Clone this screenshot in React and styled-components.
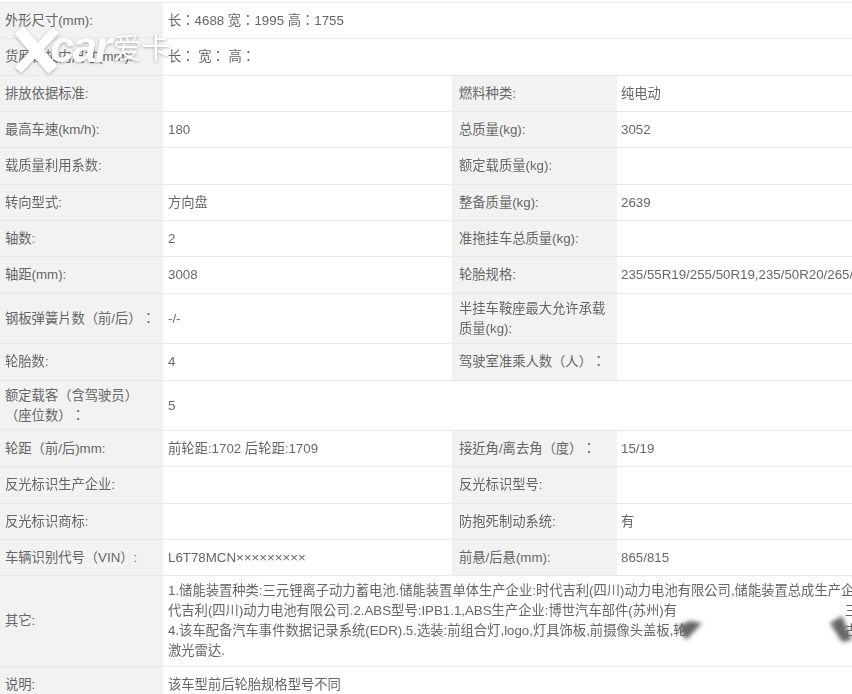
import styled, { createGlobalStyle } from "styled-components";

const GlobalStyle = createGlobalStyle`
  html, body {
    margin: 0;
    padding: 0;
    background: #fff;
    overflow: hidden;
  }
`;

const Page = styled.div`
  position: relative;
  width: 852px;
  height: 694px;
  overflow: hidden;
  background: #fff;
  font-family: "Liberation Sans", "Noto Sans CJK TC", sans-serif;
  font-size: 13.3px;
  color: #666;
  text-spacing-trim: space-all;
`;

const Sheet = styled.div`
  width: 852px;
  padding-top: 2px;
  filter: blur(0.4px);
`;

const Row = styled.div`
  display: grid;
  grid-template-columns: ${({ $wide }) =>
    $wide ? "163px minmax(0, 1fr)" : "163px 289px 165px minmax(0, 1fr)"};
  height: ${({ $h }) => $h}px;
  box-sizing: border-box;
  border-top: 1px solid #e9e9e9;
`;

const Label = styled.div`
  display: flex;
  align-items: center;
  box-sizing: border-box;
  padding-left: ${({ $right }) => ($right ? 7 : 5)}px;
  background: #f2f2f2;
  line-height: 20px;
  white-space: pre-line;
`;

const Value = styled.div`
  display: flex;
  align-items: center;
  box-sizing: border-box;
  padding-left: ${({ $right }) => ($right ? 4 : 5)}px;
  line-height: 20px;
  white-space: nowrap;
  overflow: hidden;
`;

const Notes = styled.div`
  width: 100%;
  white-space: nowrap;
`;

const NoteLine = styled.div`
  display: flex;
  justify-content: space-between;
  margin-right: -6px;
`;

const Logo = styled.div`
  position: absolute;
  left: 14px;
  top: 24px;
  display: flex;
  align-items: center;
  color: #fff;
  filter: drop-shadow(0 1px 1.5px rgba(0, 0, 0, 0.3));
`;

const LogoMark = styled.svg`
  width: 46px;
  height: 52px;
`;

const LogoWord = styled.span`
  margin-left: -10px;
  margin-top: -7px;
  font-family: "Liberation Sans", sans-serif;
  font-weight: 700;
  font-style: italic;
  font-size: 44px;
  line-height: 44px;
  letter-spacing: -2px;
`;

const LogoCn = styled.span`
  margin-left: 3px;
  margin-top: -9px;
  font-family: "Noto Sans CJK SC", sans-serif;
  font-weight: 400;
  font-size: 29px;
  line-height: 34px;
`;

const Patch = styled.svg`
  position: absolute;
  left: 670px;
  top: 596px;
  width: 182px;
  height: 60px;
`;

const rows = [
  { h: 36, wide: true, a: "外形尺寸(mm):", b: "长：4688 宽：1995 高：1755" },
  { h: 37, wide: true, a: "货厢栏板内尺寸(mm):", b: "长：  宽：  高：" },
  { h: 36, a: "排放依据标准:", b: "", c: "燃料种类:", d: "纯电动" },
  { h: 36, a: "最高车速(km/h):", b: "180", c: "总质量(kg):", d: "3052" },
  { h: 37, a: "载质量利用系数:", b: "", c: "额定载质量(kg):", d: "" },
  { h: 36, a: "转向型式:", b: "方向盘", c: "整备质量(kg):", d: "2639" },
  { h: 36, a: "轴数:", b: "2", c: "准拖挂车总质量(kg):", d: "" },
  { h: 37, a: "轴距(mm):", b: "3008", c: "轮胎规格:", d: "235/55R19/255/50R19,235/50R20/265/" },
  { h: 50, a: "钢板弹簧片数（前/后）：", b: "-/-", c: "半挂车鞍座最大允许承载\n质量(kg):", d: "" },
  { h: 37, a: "轮胎数:", b: "4", c: "驾驶室准乘人数（人）：", d: "" },
  { h: 50, wide: true, a: "额定载客（含驾驶员）\n（座位数）：", b: "5" },
  { h: 36, a: "轮距（前/后)mm:", b: "前轮距:1702 后轮距:1709", c: "接近角/离去角（度）：", d: "15/19" },
  { h: 37, a: "反光标识生产企业:", b: "", c: "反光标识型号:", d: "" },
  { h: 36, a: "反光标识商标:", b: "", c: "防抱死制动系统:", d: "有" },
  { h: 36, a: "车辆识别代号（VIN）:", b: "L6T78MCN×××××××××", c: "前悬/后悬(mm):", d: "865/815" },
];

const notes = [
  ["1.储能装置种类:三元锂离子动力蓄电池.储能装置单体生产企业:时代吉利(四川)动力电池有限公司,储能装置总成生产企业"],
  ["代吉利(四川)动力电池有限公司.2.ABS型号:IPB1.1,ABS生产企业:博世汽车部件(苏州)有", "三"],
  ["4.该车配备汽车事件数据记录系统(EDR).5.选装:前组合灯,logo,灯具饰板,前摄像头盖板,轮", "古"],
  ["激光雷达."],
];

function Watermark() {
  return (
    <Logo>
      <LogoMark viewBox="0 0 46 52">
        <path d="M5 6 L39 46" stroke="#fff" strokeWidth="12" fill="none" />
        <path d="M42 6 L4 46" stroke="#fff" strokeWidth="9" fill="none" />
      </LogoMark>
      <LogoWord>car</LogoWord>
      <LogoCn>爱卡</LogoCn>
    </Logo>
  );
}

function Smudge() {
  return (
    <Patch viewBox="0 0 182 60">
      <defs>
        <filter id="soft" x="-30%" y="-30%" width="160%" height="160%">
          <feGaussianBlur stdDeviation="3" />
        </filter>
        <filter id="edge" x="-30%" y="-60%" width="160%" height="220%">
          <feGaussianBlur stdDeviation="2" />
        </filter>
      </defs>
      <rect x="22" y="6" width="146" height="44" fill="#fff" filter="url(#soft)" />
      <path d="M8 30 L20 25 L32 27 L16 44 Z" fill="#666" filter="url(#edge)" />
      <path d="M160 27 L172 20 L182 44 L172 46 Z" fill="#666" filter="url(#edge)" />
    </Patch>
  );
}

export default function App() {
  return (
    <Page>
      <GlobalStyle />
      <Sheet>
        {rows.map((r) =>
          r.wide ? (
            <Row key={r.a} $wide $h={r.h}>
              <Label>{r.a}</Label>
              <Value>{r.b}</Value>
            </Row>
          ) : (
            <Row key={r.a} $h={r.h}>
              <Label>{r.a}</Label>
              <Value>{r.b}</Value>
              <Label $right>{r.c}</Label>
              <Value $right>{r.d}</Value>
            </Row>
          )
        )}
        <Row $wide $h={91}>
          <Label>其它:</Label>
          <Value>
            <Notes>
              {notes.map((parts) => (
                <NoteLine key={parts[0]}>
                  {parts.map((part) => (
                    <span key={part}>{part}</span>
                  ))}
                </NoteLine>
              ))}
            </Notes>
          </Value>
        </Row>
        <Row $wide $h={37}>
          <Label>说明:</Label>
          <Value>该车型前后轮胎规格型号不同</Value>
        </Row>
      </Sheet>
      <Smudge />
      <Watermark />
    </Page>
  );
}
